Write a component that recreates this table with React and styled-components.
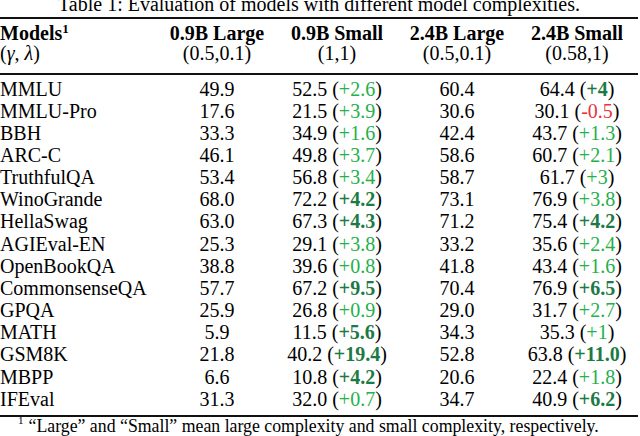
import React from "react";
import styled, { createGlobalStyle } from "styled-components";

const Global = createGlobalStyle`
  html, body {
    margin: 0;
    padding: 0;
    background: #fff;
  }
  body {
    font-family: "Liberation Serif", "Times New Roman", serif;
    color: #000;
  }
`;

const Page = styled.div`
  width: 640px;
  height: 436px;
  overflow: hidden;
  background: #fff;
`;

const Table = styled.div`
  width: 638px;
  display: flex;
  flex-direction: column;
`;

const Caption = styled.div`
  margin-top: -6px;
  height: 20px;
  line-height: 20px;
  font-size: 20px;
  text-align: center;
  white-space: nowrap;
`;

const Rule = styled.div`
  height: ${(p) => (p.$thin ? "1.5px" : "2px")};
  background: #111;
  margin-top: ${(p) => p.$gap || 0}px;
`;

const Row = styled.div`
  display: grid;
  grid-template-columns: 157px repeat(4, 120px);
  font-size: 20px;
  line-height: ${(p) => (p.$head ? "20px" : "22.15px")};
  white-space: nowrap;
`;

const Section = styled.div`
  display: flex;
  flex-direction: column;
  padding-top: ${(p) => p.$top}px;
  padding-bottom: ${(p) => p.$bottom}px;
`;

const Cell = styled.div`
  text-align: ${(p) => (p.$left ? "left" : "center")};
  font-weight: ${(p) => (p.$bold ? 700 : 400)};
`;

const Sup = styled.sup`
  font-size: 13px;
  line-height: 0;
  vertical-align: 7px;
`;

const MathVar = styled.i`
  font-style: italic;
`;

const tones = {
  up: { color: "#24b04b", weight: 400 },
  big: { color: "#1c7a44", weight: 700 },
  down: { color: "#e8333a", weight: 400 },
};

const Delta = styled.span`
  color: ${(p) => tones[p.$tone].color};
  font-weight: ${(p) => tones[p.$tone].weight};
`;

const Footnote = styled.div`
  padding-left: 18px;
  font-size: 17.8px;
  line-height: 18px;
  white-space: nowrap;
`;

const FootMark = styled.sup`
  font-size: 11px;
  line-height: 0;
  vertical-align: 8px;
  margin-right: 5px;
`;

const heads = [
  ["0.9B Large", "(0.5,0.1)"],
  ["0.9B Small", "(1,1)"],
  ["2.4B Large", "(0.5,0.1)"],
  ["2.4B Small", "(0.58,1)"],
];

// [name, 0.9B L, 0.9B S, delta, tone, 2.4B L, 2.4B S, delta, tone]
const rows = [
  ["MMLU", "49.9", "52.5", "+2.6", "up", "60.4", "64.4", "+4", "big"],
  ["MMLU-Pro", "17.6", "21.5", "+3.9", "up", "30.6", "30.1", "-0.5", "down"],
  ["BBH", "33.3", "34.9", "+1.6", "up", "42.4", "43.7", "+1.3", "up"],
  ["ARC-C", "46.1", "49.8", "+3.7", "up", "58.6", "60.7", "+2.1", "up"],
  ["TruthfulQA", "53.4", "56.8", "+3.4", "up", "58.7", "61.7", "+3", "up"],
  ["WinoGrande", "68.0", "72.2", "+4.2", "big", "73.1", "76.9", "+3.8", "up"],
  ["HellaSwag", "63.0", "67.3", "+4.3", "big", "71.2", "75.4", "+4.2", "big"],
  ["AGIEval-EN", "25.3", "29.1", "+3.8", "up", "33.2", "35.6", "+2.4", "up"],
  ["OpenBookQA", "38.8", "39.6", "+0.8", "up", "41.8", "43.4", "+1.6", "up"],
  ["CommonsenseQA", "57.7", "67.2", "+9.5", "big", "70.4", "76.9", "+6.5", "big"],
  ["GPQA", "25.9", "26.8", "+0.9", "up", "29.0", "31.7", "+2.7", "up"],
  ["MATH", "5.9", "11.5", "+5.6", "big", "34.3", "35.3", "+1", "up"],
  ["GSM8K", "21.8", "40.2", "+19.4", "big", "52.8", "63.8", "+11.0", "big"],
  ["MBPP", "6.6", "10.8", "+4.2", "big", "20.6", "22.4", "+1.8", "up"],
  ["IFEval", "31.3", "32.0", "+0.7", "up", "34.7", "40.9", "+6.2", "big"],
];

const Gain = ({ value, delta, tone }) => (
  <Cell>
    {value} (<Delta $tone={tone}>{delta}</Delta>)
  </Cell>
);

export default function App() {
  return (
    <Page>
      <Global />
      <Table>
        <Caption>Table 1: Evaluation of models with different model complexities.</Caption>
        <Rule $gap={3} />
        <Section $top={4} $bottom={10}>
          <Row $head>
            <Cell $left $bold>
              Models<Sup>1</Sup>
            </Cell>
            {heads.map(([name]) => (
              <Cell key={name} $bold>
                {name}
              </Cell>
            ))}
          </Row>
          <Row $head>
            <Cell $left>
              (<MathVar>γ</MathVar>, <MathVar>λ</MathVar>)
            </Cell>
            {heads.map(([name, params]) => (
              <Cell key={name}>{params}</Cell>
            ))}
          </Row>
        </Section>
        <Rule $thin />
        <Section $top={3} $bottom={5}>
          {rows.map((r) => (
            <Row key={r[0]}>
              <Cell $left>{r[0]}</Cell>
              <Cell>{r[1]}</Cell>
              <Gain value={r[2]} delta={r[3]} tone={r[4]} />
              <Cell>{r[5]}</Cell>
              <Gain value={r[6]} delta={r[7]} tone={r[8]} />
            </Row>
          ))}
        </Section>
        <Rule />
        <Footnote>
          <FootMark>1</FootMark>“Large” and “Small” mean large complexity and small complexity, respectively.
        </Footnote>
      </Table>
    </Page>
  );
}
